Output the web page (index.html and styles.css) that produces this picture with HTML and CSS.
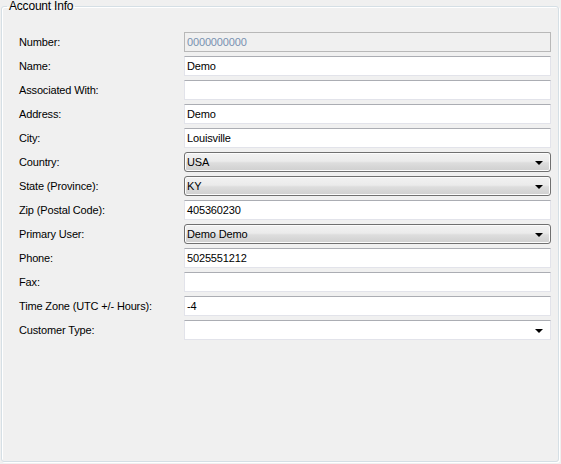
FILE: index.html
```html
<!DOCTYPE html>
<html>
<head>
<meta charset="utf-8">
<link rel="stylesheet" href="styles.css">
</head>
<body>
<fieldset class="group">
  <legend class="group-title">Account Info</legend>
  <div class="form">
    <div class="label">Number:</div>
    <div class="field readonly">0000000000</div>
    <div class="label">Name:</div>
    <div class="field">Demo</div>
    <div class="label">Associated With:</div>
    <div class="field"></div>
    <div class="label">Address:</div>
    <div class="field">Demo</div>
    <div class="label">City:</div>
    <div class="field">Louisville</div>
    <div class="label">Country:</div>
    <div class="combo"><span>USA</span><span class="arrow"></span></div>
    <div class="label">State (Province):</div>
    <div class="combo"><span>KY</span><span class="arrow"></span></div>
    <div class="label">Zip (Postal Code):</div>
    <div class="field">405360230</div>
    <div class="label">Primary User:</div>
    <div class="combo"><span>Demo Demo</span><span class="arrow"></span></div>
    <div class="label">Phone:</div>
    <div class="field">5025551212</div>
    <div class="label">Fax:</div>
    <div class="field"></div>
    <div class="label">Time Zone (UTC +/- Hours):</div>
    <div class="field">-4</div>
    <div class="label">Customer Type:</div>
    <div class="field combo-flat"><span></span><span class="arrow"></span></div>
  </div>
</fieldset>
</body>
</html>
```

FILE: styles.css
```css
html, body {
  margin: 0;
  padding: 0;
  background: #f0f0f0;
  width: 561px;
  height: 464px;
  overflow: hidden;
  font-family: "Liberation Sans", Arial, sans-serif;
  font-size: 11px;
  letter-spacing: -0.15px;
  color: #000;
}

.group {
  box-sizing: border-box;
  margin: 0 0 0 1px;
  width: 558px;
  height: 462px;
  padding: 0 6px 0 17px;
  border: 1px solid #d5dfe5;
  border-radius: 3px;
  box-shadow: inset 1px 1px 0 #ffffff, 1px 1px 0 #ffffff;
}

.group-title {
  padding: 0 2px;
  margin-left: -12px;
  font-size: 12px;
  line-height: 13px;
  letter-spacing: -0.2px;
}

.form {
  display: grid;
  grid-template-columns: 165px 367px;
  grid-auto-rows: 20px;
  row-gap: 4px;
  margin-top: 19px;
  align-items: center;
}

.label {
  line-height: 20px;
}

.field {
  box-sizing: border-box;
  height: 20px;
  background: #ffffff;
  border: 1px solid #e2e3ea;
  border-top-color: #abadb3;
  padding: 0 2px;
  line-height: 18px;
  white-space: nowrap;
}

.readonly {
  background: #f0f0f0;
  border: 1px solid #b8b8b8;
  color: #7890b0;
}

.combo {
  box-sizing: border-box;
  height: 20px;
  border: 1px solid #707070;
  border-radius: 3px;
  background: linear-gradient(#f2f2f2 0%, #ebebeb 45%, #dddddd 55%, #cfcfcf 100%);
  padding: 0 7px 0 2px;
  line-height: 18px;
  display: flex;
  align-items: center;
  justify-content: space-between;
  box-shadow: inset 0 0 0 1px #fcfcfc;
}

.combo-flat {
  display: flex;
  align-items: center;
  justify-content: space-between;
  padding-right: 7px;
}

.arrow {
  width: 0;
  height: 0;
  border-left: 4px solid transparent;
  border-right: 4px solid transparent;
  border-top: 4px solid #000;
  margin-top: 1px;
}
```
